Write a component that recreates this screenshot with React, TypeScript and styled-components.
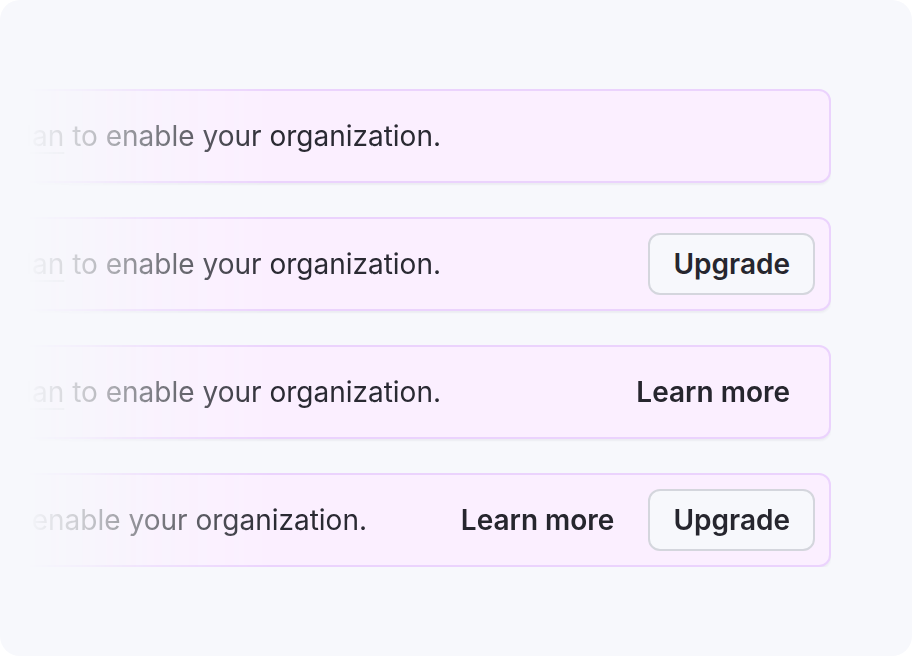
import React from "react";
import styled, { createGlobalStyle } from "styled-components";

const Global = createGlobalStyle`
  html, body { margin: 0; padding: 0; background: #ffffff; }
  body { font-family: Inter, "Noto Sans", sans-serif; -webkit-font-smoothing: antialiased; }
`;

const Card = styled.div`
  width: 912px;
  height: 656px;
  box-sizing: border-box;
  background: #f7f8fc;
  border-radius: 20px;
  padding: 89px 81px 0 0;
  overflow: hidden;
`;

const Stack = styled.div`
  display: flex;
  flex-direction: column;
  gap: 34px;
  -webkit-mask-image: linear-gradient(to right, transparent 28px, rgba(0,0,0,0.25) 90px, rgba(0,0,0,0.6) 155px, #000 270px);
  mask-image: linear-gradient(to right, transparent 28px, rgba(0,0,0,0.25) 90px, rgba(0,0,0,0.6) 155px, #000 270px);
`;

const Banner = styled.div`
  display: flex;
  align-items: center;
  height: 94px;
  box-sizing: border-box;
  margin-left: -20px;
  padding: 0 14px 0 0;
  background: #fbefff;
  border: 2px solid #ebd3fd;
  border-radius: 12px;
  box-shadow: 0 2px 2px rgba(60, 60, 90, 0.06);
`;

const Message = styled.div<{ $end: number }>`
  flex: 0 0 auto;
  width: ${(p) => p.$end + 20 - 2}px;
  display: flex;
  justify-content: flex-end;
  overflow: hidden;
  white-space: nowrap;
  font-size: 28px;
  line-height: 36px;
  color: #2a2a33;
`;

const Link = styled.span`
  text-decoration: underline;
  text-decoration-color: #c9c9d2;
  text-decoration-thickness: 2px;
  text-underline-offset: 6px;
`;

const Actions = styled.div`
  margin-left: auto;
  display: flex;
  align-items: center;
  gap: 9px;
`;

const Button = styled.button<{ $variant: "ghost" | "outline" }>`
  height: 62px;
  box-sizing: border-box;
  padding: 0 23px;
  border-radius: 12px;
  border: 2px solid ${(p) => (p.$variant === "outline" ? "#d4d6dd" : "transparent")};
  background: ${(p) => (p.$variant === "outline" ? "#f7f8fc" : "transparent")};
  font-family: Inter, "Noto Sans", sans-serif;
  font-size: 28px;
  font-weight: 600;
  color: #26262e;
  cursor: pointer;
`;

type Row = { end: number; learn: boolean; upgrade: boolean };

const rows: Row[] = [
  { end: 441, learn: false, upgrade: false },
  { end: 441, learn: false, upgrade: true },
  { end: 441, learn: true, upgrade: false },
  { end: 367, learn: true, upgrade: true },
];

export default function App() {
  return (
    <>
      <Global />
      <Card>
        <Stack>
          {rows.map((r, i) => (
            <Banner key={i}>
              <Message $end={r.end}>
                <span>
                  Upgrade to a paid <Link>plan</Link> to enable your organization.
                </span>
              </Message>
              {(r.learn || r.upgrade) && (
                <Actions>
                  {r.learn && <Button $variant="ghost">Learn more</Button>}
                  {r.upgrade && <Button $variant="outline">Upgrade</Button>}
                </Actions>
              )}
            </Banner>
          ))}
        </Stack>
      </Card>
    </>
  );
}
